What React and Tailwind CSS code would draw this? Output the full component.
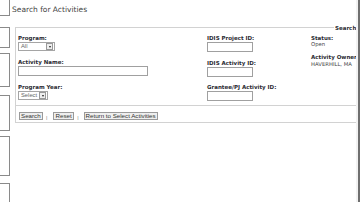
import React from "react";

function Box({ className }) {
  return <div className={"w-[10px] border-r border-[#8a8a8a] bg-white " + className} />;
}

function Label({ children }) {
  return (
    <div className="text-[5.5px] leading-[7px] font-bold text-[#2c2c34] whitespace-nowrap">{children}</div>
  );
}

function Select({ text, width }) {
  return (
    <div className={"h-[9px] border border-[#a5a5a5] bg-white flex items-center justify-between " + width}>
      <span className="pl-[2px] text-[5.8px] leading-none text-[#666] font-['Liberation_Sans',sans-serif]">{text}</span>
      <span className="w-[7px] h-[7px] mr-px border border-[#999] bg-[#eeeeee] flex items-center justify-center">
        <span className="w-0 h-0 border-l-[1.5px] border-r-[1.5px] border-t-[2px] border-l-transparent border-r-transparent border-t-[#222]" />
      </span>
    </div>
  );
}

function Input({ width }) {
  return <div className={"h-[10px] border border-[#a0a0a0] bg-white " + width} />;
}

function Btn({ children }) {
  return (
    <div className="h-[8px] px-[1px] border border-[#9a9a9a] bg-[#efefef] flex items-center text-[6.2px] leading-none text-[#333] font-['Liberation_Sans',sans-serif] whitespace-nowrap">
      {children}
    </div>
  );
}

function Pipe({ className }) {
  return (
    <span className={"self-start mt-[4px] text-[4px] leading-[4px] text-[#555] " + className}>|</span>
  );
}

export default function App() {
  return (
    <div className="w-[360px] h-[202px] overflow-hidden bg-white flex font-['DejaVu_Sans',sans-serif]">
      {/* left sidebar */}
      <div className="w-[10px] flex flex-col shrink-0">
        <Box className="h-[17px] border-b" />
        <Box className="h-[22px] mt-[11px] border-y" />
        <Box className="h-[35px] mt-[5px] border-y" />
        <Box className="h-[37px] mt-[8px] border-y" />
        <Box className="h-[42px] mt-[5px] border-y" />
        <Box className="h-[20px] mt-[7px] border-t" />
      </div>

      {/* main */}
      <div className="w-[346px] shrink-0 overflow-hidden relative">
        <div className="pl-[2px] pt-[5px] text-[7.5px] leading-[10px] text-[#444] whitespace-nowrap">
          Search for Activities
        </div>

        <div className="ml-[5px] mt-[12px] w-[420px] border-t border-l border-b border-[#d2d2d2] relative">
          <div className="absolute left-[318px] top-[-3px] bg-white px-px text-[5.5px] leading-[7px] font-bold text-[#2c2c34] whitespace-nowrap">
            Search Criteria
          </div>

          <div className="h-[77px] flex pl-[2px]">
            {/* col 1 */}
            <div className="w-[189px] pt-[7px] flex flex-col">
              <Label>Program:</Label>
              <Select text="All" width="w-[37px]" />
              <div className="mt-[8px]">
                <Label>Activity Name:</Label>
              </div>
              <Input width="w-[130px]" />
              <div className="mt-[8px]">
                <Label>Program Year:</Label>
              </div>
              <Select text="Select" width="w-[30px]" />
            </div>

            {/* col 2 */}
            <div className="w-[104px] pt-[7px] flex flex-col">
              <Label>IDIS Project ID:</Label>
              <Input width="w-[46px]" />
              <div className="mt-[8px]">
                <Label>IDIS Activity ID:</Label>
              </div>
              <Input width="w-[46px]" />
              <div className="mt-[7px]">
                <Label>Grantee/PJ Activity ID:</Label>
              </div>
              <Input width="w-[46px]" />
            </div>

            {/* col 3 */}
            <div className="flex-1 pt-[7px] flex flex-col">
              <div className="text-[5.5px] leading-[6px] font-bold text-[#2c2c34] whitespace-nowrap">Status:</div>
              <div className="text-[5.3px] leading-[6px] text-[#444] whitespace-nowrap">Open</div>
              <div className="mt-[7px] text-[5.5px] leading-[6px] font-bold text-[#2c2c34] whitespace-nowrap">Activity Owner:</div>
              <div className="mt-px text-[5.3px] leading-[6px] text-[#444] whitespace-nowrap">HAVERHILL, MA</div>
            </div>
          </div>

          <div className="h-[17px] border-t border-[#d2d2d2] flex items-start pt-[6px] pl-[3px]">
            <Btn>Search</Btn>
            <Pipe className="ml-[3.5px] mr-[6px]" />
            <Btn>Reset</Btn>
            <Pipe className="ml-[3.5px] mr-[5px]" />
            <Btn>Return to Select Activities</Btn>
          </div>
        </div>
      </div>

      {/* right edge */}
      <div className="w-[4px] shrink-0 flex">
        <div className="w-[2px] bg-[#f2f2f2]" />
        <div className="w-[2px] bg-[#6f6f6f]" />
      </div>
    </div>
  );
}
